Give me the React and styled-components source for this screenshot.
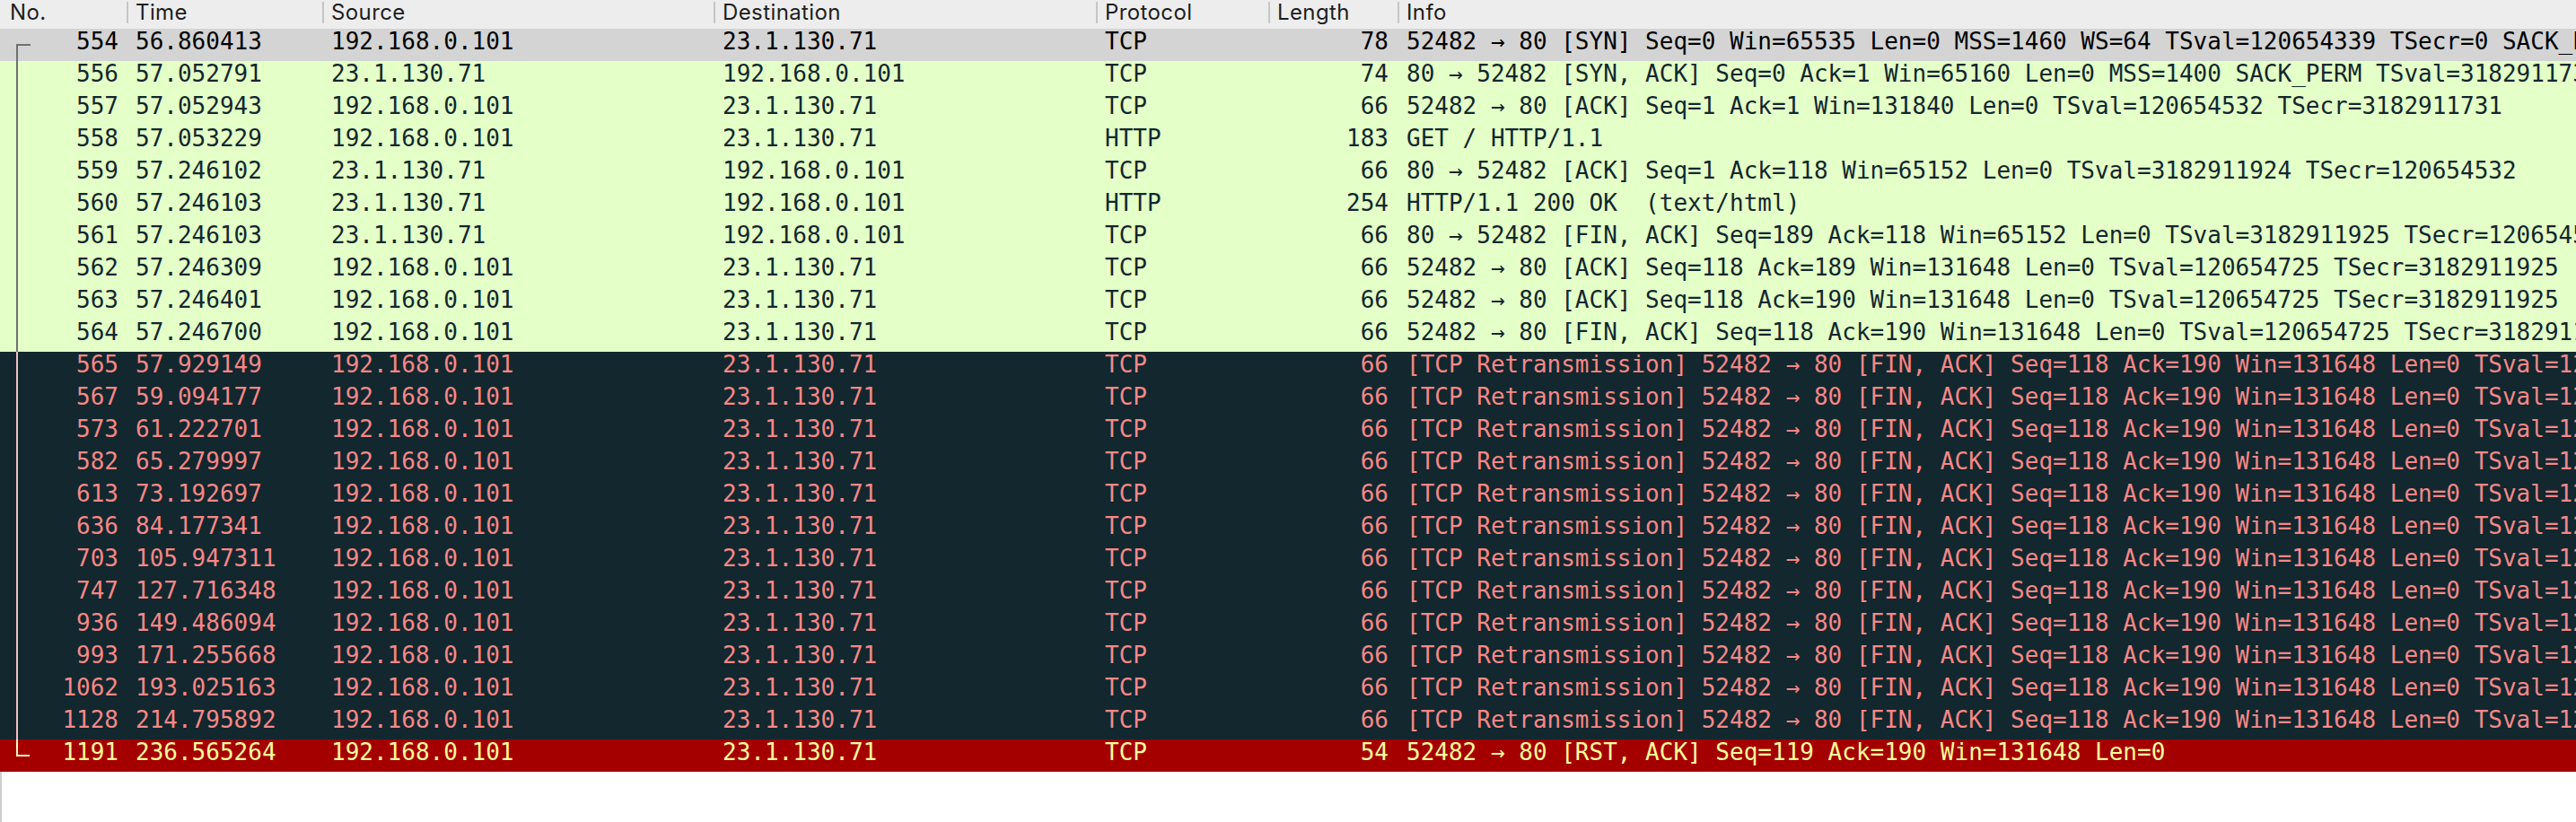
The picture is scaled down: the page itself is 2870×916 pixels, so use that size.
import styled, { createGlobalStyle } from 'styled-components'

const GlobalStyle = createGlobalStyle`
  html, body {
    margin: 0;
    padding: 0;
    background: #ffffff;
  }
  #root {
    width: 100%;
  }
`

const COLUMNS = '141px 218px 436px 426px 192px 144px 1fr'

const themes = {
  start: { bg: '#d4d4d4', fg: '#000000', line: '#707070' },
  ok: { bg: '#e4ffc7', fg: '#12272e', line: '#707070' },
  bad: { bg: '#12272e', fg: '#f78787', line: '#f3c0c0' },
  rst: { bg: '#a40000', fg: '#fffc9c', line: '#fff6c8' },
}

const Page = styled.div`
  min-height: 100vh;
  display: flex;
  flex-direction: column;
  background: #ffffff;
`

const HeaderRow = styled.div`
  display: grid;
  grid-template-columns: ${COLUMNS};
  height: 32px;
  background: #ededed;
  font-family: 'Inter', 'Liberation Sans', sans-serif;
  font-size: 24px;
  letter-spacing: 0.4px;
  color: #1e1e1e;
`

const HeaderCell = styled.div`
  display: flex;
  align-items: flex-start;
  line-height: 28px;
  padding-left: ${p => (p.$first ? '11px' : '0')};
  overflow: hidden;
  white-space: nowrap;
`

const Divider = styled.span`
  flex: none;
  width: 2px;
  height: 24px;
  margin-top: 2px;
  margin-right: 8px;
  background: #c6c6c6;
`

const List = styled.div`
  flex: 1;
  border-left: 2px solid #cfcfcf;
`

const Row = styled.div`
  display: grid;
  grid-template-columns: ${COLUMNS};
  height: 36px;
  margin-left: -2px;
  background: ${p => themes[p.$kind].bg};
  color: ${p => themes[p.$kind].fg};
  font-family: 'DejaVu Sans Mono', 'Liberation Mono', monospace;
  font-size: 26px;
`

const Cell = styled.div`
  padding: 0 10px;
  line-height: 28px;
  white-space: pre;
  overflow: hidden;
  text-align: ${p => (p.$right ? 'right' : 'left')};
`

const NoCell = styled.div`
  display: flex;
  justify-content: space-between;
  padding-right: 9px;
  line-height: 28px;
  overflow: hidden;
`

const InfoCell = styled(Cell)`
  overflow: hidden;
`

function TreeMark({ pos, color }) {
  return (
    <svg width="40" height="36" viewBox="0 0 40 36" style={{ display: 'block', flex: 'none' }}>
      {pos === 'first' && (
        <>
          <rect x="18" y="17" width="16" height="2" fill={color} />
          <rect x="18" y="17" width="2" height="19" fill={color} />
        </>
      )}
      {pos === 'mid' && <rect x="18" y="0" width="2" height="36" fill={color} />}
      {pos === 'last' && (
        <>
          <rect x="18" y="0" width="2" height="19" fill={color} />
          <rect x="18" y="17" width="15" height="2" fill={color} />
        </>
      )}
    </svg>
  )
}

const CLIENT = '192.168.0.101'
const SERVER = '23.1.130.71'
const RETRANS = '[TCP Retransmission] 52482 → 80 [FIN, ACK] Seq=118 Ack=190 Win=131648 Len=0 TSval=120655408 TSecr=3182911925'

const packets = [
  ['554', '56.860413', CLIENT, SERVER, 'TCP', '78', '52482 → 80 [SYN] Seq=0 Win=65535 Len=0 MSS=1460 WS=64 TSval=120654339 TSecr=0 SACK_PERM', 'start'],
  ['556', '57.052791', SERVER, CLIENT, 'TCP', '74', '80 → 52482 [SYN, ACK] Seq=0 Ack=1 Win=65160 Len=0 MSS=1400 SACK_PERM TSval=3182911731 TSecr=120654339 WS=128', 'ok'],
  ['557', '57.052943', CLIENT, SERVER, 'TCP', '66', '52482 → 80 [ACK] Seq=1 Ack=1 Win=131840 Len=0 TSval=120654532 TSecr=3182911731', 'ok'],
  ['558', '57.053229', CLIENT, SERVER, 'HTTP', '183', 'GET / HTTP/1.1 ', 'ok'],
  ['559', '57.246102', SERVER, CLIENT, 'TCP', '66', '80 → 52482 [ACK] Seq=1 Ack=118 Win=65152 Len=0 TSval=3182911924 TSecr=120654532', 'ok'],
  ['560', '57.246103', SERVER, CLIENT, 'HTTP', '254', 'HTTP/1.1 200 OK  (text/html)', 'ok'],
  ['561', '57.246103', SERVER, CLIENT, 'TCP', '66', '80 → 52482 [FIN, ACK] Seq=189 Ack=118 Win=65152 Len=0 TSval=3182911925 TSecr=120654532', 'ok'],
  ['562', '57.246309', CLIENT, SERVER, 'TCP', '66', '52482 → 80 [ACK] Seq=118 Ack=189 Win=131648 Len=0 TSval=120654725 TSecr=3182911925', 'ok'],
  ['563', '57.246401', CLIENT, SERVER, 'TCP', '66', '52482 → 80 [ACK] Seq=118 Ack=190 Win=131648 Len=0 TSval=120654725 TSecr=3182911925', 'ok'],
  ['564', '57.246700', CLIENT, SERVER, 'TCP', '66', '52482 → 80 [FIN, ACK] Seq=118 Ack=190 Win=131648 Len=0 TSval=120654725 TSecr=3182911925', 'ok'],
  ['565', '57.929149', CLIENT, SERVER, 'TCP', '66', RETRANS, 'bad'],
  ['567', '59.094177', CLIENT, SERVER, 'TCP', '66', RETRANS, 'bad'],
  ['573', '61.222701', CLIENT, SERVER, 'TCP', '66', RETRANS, 'bad'],
  ['582', '65.279997', CLIENT, SERVER, 'TCP', '66', RETRANS, 'bad'],
  ['613', '73.192697', CLIENT, SERVER, 'TCP', '66', RETRANS, 'bad'],
  ['636', '84.177341', CLIENT, SERVER, 'TCP', '66', RETRANS, 'bad'],
  ['703', '105.947311', CLIENT, SERVER, 'TCP', '66', RETRANS, 'bad'],
  ['747', '127.716348', CLIENT, SERVER, 'TCP', '66', RETRANS, 'bad'],
  ['936', '149.486094', CLIENT, SERVER, 'TCP', '66', RETRANS, 'bad'],
  ['993', '171.255668', CLIENT, SERVER, 'TCP', '66', RETRANS, 'bad'],
  ['1062', '193.025163', CLIENT, SERVER, 'TCP', '66', RETRANS, 'bad'],
  ['1128', '214.795892', CLIENT, SERVER, 'TCP', '66', RETRANS, 'bad'],
  ['1191', '236.565264', CLIENT, SERVER, 'TCP', '54', '52482 → 80 [RST, ACK] Seq=119 Ack=190 Win=131648 Len=0', 'rst'],
]

const headers = ['No.', 'Time', 'Source', 'Destination', 'Protocol', 'Length', 'Info']

export default function App() {
  return (
    <Page>
      <GlobalStyle />
      <HeaderRow>
        {headers.map((h, i) => (
          <HeaderCell key={h} $first={i === 0}>
            {i > 0 && <Divider />}
            {h}
          </HeaderCell>
        ))}
      </HeaderRow>
      <List>
        {packets.map(([no, time, src, dst, proto, len, info, kind], i) => {
          const pos = i === 0 ? 'first' : i === packets.length - 1 ? 'last' : 'mid'
          return (
            <Row key={no} $kind={kind}>
              <NoCell>
                <TreeMark pos={pos} color={themes[kind].line} />
                <span>{no}</span>
              </NoCell>
              <Cell>{time}</Cell>
              <Cell>{src}</Cell>
              <Cell>{dst}</Cell>
              <Cell>{proto}</Cell>
              <Cell $right>{len}</Cell>
              <InfoCell>{info}</InfoCell>
            </Row>
          )
        })}
      </List>
    </Page>
  )
}
